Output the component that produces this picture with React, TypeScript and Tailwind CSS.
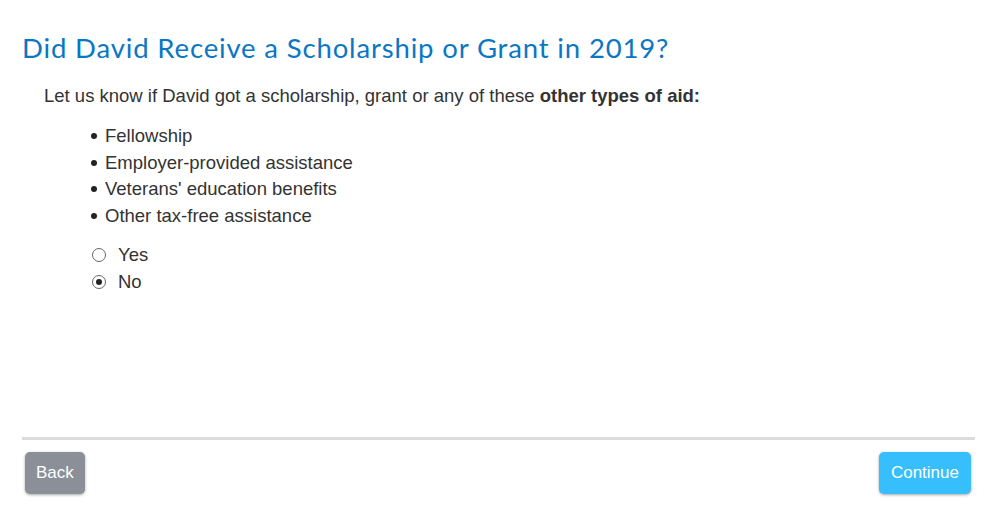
import { useState } from 'react';

const aidTypes = [
    'Fellowship',
    'Employer-provided assistance',
    "Veterans' education benefits",
    'Other tax-free assistance',
];

export default function App() {
    const [answer, setAnswer] = useState<'yes' | 'no'>('no');

    return (
        <div className="h-[526px] flex flex-col bg-white text-[#333] font-['Liberation_Sans',Arial,sans-serif]">
            <div className="flex-1 pl-[22px] pt-[30px]">
                <h1 className="font-['Lato',sans-serif] text-[27.5px] leading-[36px] tracking-[0.85px] text-[#0b77c4] font-normal">
                    Did David Receive a Scholarship or Grant in 2019?
                </h1>
                <p className="mt-[19px] ml-[22px] text-[18.5px] leading-[22px]">
                    Let us know if David got a scholarship, grant or any of these <b>other types of aid:</b>
                </p>
                <ul className="mt-[18px] ml-[69px] space-y-[4px] text-[18.5px] leading-[22.5px]">
                    {aidTypes.map((item) => (
                        <li key={item} className="flex items-center gap-[8px]">
                            <span className="w-[6px] h-[6px] rounded-full bg-[#222]" />
                            {item}
                        </li>
                    ))}
                </ul>
                <div className="mt-[17px] ml-[70px] space-y-[5px] text-[18.5px] leading-[22px]">
                    {(['yes', 'no'] as const).map((opt) => (
                        <label key={opt} className="flex items-center gap-[12px] cursor-pointer">
                            <button
                                type="button"
                                onClick={() => setAnswer(opt)}
                                className="w-[14px] h-[14px] rounded-full border border-[#666] flex items-center justify-center bg-white"
                            >
                                {answer === opt && <span className="w-[6px] h-[6px] rounded-full bg-[#222]" />}
                            </button>
                            {opt === 'yes' ? 'Yes' : 'No'}
                        </label>
                    ))}
                </div>
            </div>
            <div className="ml-[22px] mr-[24px] border-t-[3px] border-[#dcdcdc]" />
            <div className="flex justify-between pl-[25px] pr-[28px] pt-[12px] pb-[32px]">
                <button className="h-[42px] px-[11px] rounded-[5px] bg-[#8b9098] text-white text-[17px] shadow-[0_1px_3px_rgba(0,0,0,0.35)]">
                    Back
                </button>
                <button className="h-[42px] px-[12px] rounded-[5px] bg-[#36befd] text-white text-[17px] shadow-[0_1px_3px_rgba(0,0,0,0.35)]">
                    Continue
                </button>
            </div>
        </div>
    );
}
